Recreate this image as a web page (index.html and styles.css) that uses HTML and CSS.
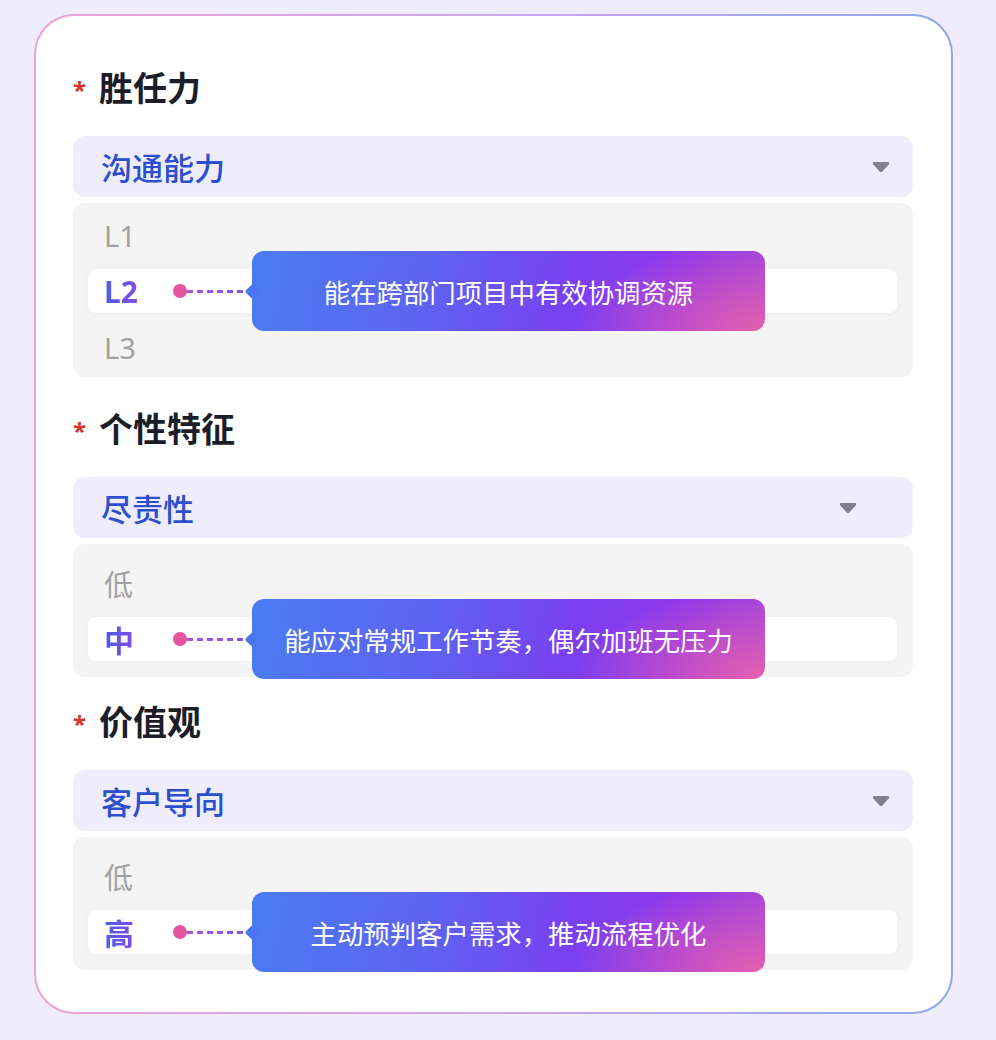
FILE: index.html
```html
<!DOCTYPE html>
<html lang="zh-CN">
<head>
<meta charset="utf-8">
<title>评估</title>
<link rel="stylesheet" href="styles.css">
</head>
<body>
<div class="card">
  <section class="section section--first">
    <h2 class="title"><span class="star">*</span>胜任力</h2>
    <div class="select">
      <span class="select-value">沟通能力</span>
      <svg class="caret" width="18" height="12" viewBox="0 0 18 12"><path d="M2.2 1h13.6c1.2 0 1.8 1.3 1.1 2.2l-6.8 7.6c-.6.6-1.6.6-2.2 0L1.1 3.2C.4 2.3 1 1 2.2 1z" fill="#7f8090"/></svg>
    </div>
    <div class="list list--three">
      <div class="opt">L1</div>
      <div class="opt opt--on"><span class="opt-label opt-label--latin">L2</span>
        <span class="link"><span class="dot"></span><span class="dash"></span></span>
        <div class="tip">能在跨部门项目中有效协调资源</div>
      </div>
      <div class="opt">L3</div>
    </div>
  </section>

  <section class="section section--second">
    <h2 class="title"><span class="star">*</span>个性特征</h2>
    <div class="select select--narrow">
      <span class="select-value">尽责性</span>
      <svg class="caret" width="18" height="12" viewBox="0 0 18 12"><path d="M2.2 1h13.6c1.2 0 1.8 1.3 1.1 2.2l-6.8 7.6c-.6.6-1.6.6-2.2 0L1.1 3.2C.4 2.3 1 1 2.2 1z" fill="#7f8090"/></svg>
    </div>
    <div class="list list--two">
      <div class="opt">低</div>
      <div class="opt opt--on"><span class="opt-label">中</span>
        <span class="link"><span class="dot"></span><span class="dash"></span></span>
        <div class="tip">能应对常规工作节奏，偶尔加班无压力</div>
      </div>
    </div>
  </section>

  <section class="section section--third">
    <h2 class="title"><span class="star">*</span>价值观</h2>
    <div class="select">
      <span class="select-value">客户导向</span>
      <svg class="caret" width="18" height="12" viewBox="0 0 18 12"><path d="M2.2 1h13.6c1.2 0 1.8 1.3 1.1 2.2l-6.8 7.6c-.6.6-1.6.6-2.2 0L1.1 3.2C.4 2.3 1 1 2.2 1z" fill="#7f8090"/></svg>
    </div>
    <div class="list list--two">
      <div class="opt">低</div>
      <div class="opt opt--on"><span class="opt-label">高</span>
        <span class="link"><span class="dot"></span><span class="dash"></span></span>
        <div class="tip">主动预判客户需求，推动流程优化</div>
      </div>
    </div>
  </section>
</div>
</body>
</html>
```

FILE: styles.css
```css
* { box-sizing: border-box; }
html, body { margin: 0; padding: 0; }
body {
  background: #efecfb;
  font-family: "Noto Sans CJK SC", "Noto Sans", sans-serif;
  width: 996px;
  height: 1040px;
  overflow: hidden;
}
.card {
  margin: 14px 0 0 34px;
  width: 919px;
  height: 1000px;
  border: 2px solid transparent;
  border-radius: 40px;
  background:
    linear-gradient(#ffffff, #ffffff) padding-box,
    linear-gradient(90deg, #eaa3d6 0%, #d2a6ec 45%, #8fa8ea 100%) border-box;
  padding: 53px 38px 0 37px;
}
.section { display: flex; flex-direction: column; }
.section--second { margin-top: 33px; }
.section--third { margin-top: 26px; }
.title {
  margin: 0;
  height: 44px;
  padding-bottom: 8px;
  display: flex;
  align-items: center;
  font-size: 34px;
  font-weight: 700;
  color: #1b1e29;
  line-height: 36px;
}
.star {
  color: #d8342c;
  font-size: 24px;
  font-weight: 700;
  width: 26px;
  font-family: "Noto Sans", sans-serif;
  position: relative;
  top: 3px;
}
.select {
  margin-top: 23px;
  height: 61px;
  border-radius: 12px;
  background: #efedfb;
  display: flex;
  align-items: center;
  justify-content: space-between;
  padding: 0 23px 0 28px;
}
.select--narrow { padding-right: 56px; }
.select-value {
  font-size: 31px;
  font-weight: 500;
  color: #2c50cd;
}
.caret { display: block; margin-top: 1px; }
.list {
  margin-top: 6px;
  background: #f4f4f5;
  border-radius: 12px;
  display: flex;
  flex-direction: column;
  gap: 12px;
}
.list--three { padding: 10px 16px 8px 15px; }
.list--two { padding: 17px 16px 16px 15px; }
.opt {
  position: relative;
  height: 44px;
  border-radius: 8px;
  padding-left: 16px;
  display: flex;
  align-items: center;
  font-size: 29px;
  color: #a2a2a4;
  font-family: "Noto Sans", "Noto Sans CJK SC", sans-serif;
}
.opt--on {
  background: #ffffff;
  box-shadow: 0 0 6px rgba(0, 0, 0, 0.03);
}
.opt-label {
  font-family: "Noto Sans CJK SC", sans-serif;
  font-weight: 700;
  font-size: 30px;
  background: linear-gradient(90deg, #4a5ee9 0%, #a33fe0 100%);
  -webkit-background-clip: text;
  background-clip: text;
  color: transparent;
  width: 50px;
}
.opt-label--latin { font-family: "Noto Sans", sans-serif; font-size: 30px; }
.link {
  position: absolute;
  left: 85px;
  top: 50%;
  transform: translateY(-50%);
  display: flex;
  align-items: center;
}
.dot {
  width: 14px;
  height: 14px;
  border-radius: 50%;
  background: #e5559e;
}
.dash {
  width: 60px;
  height: 3px;
  background:
    repeating-linear-gradient(90deg, transparent 0 6px, #ffffff 6px 10px),
    linear-gradient(90deg, #b050d8, #7a5ae8);
}
.tip {
  position: absolute;
  left: 164px;
  top: 50%;
  transform: translateY(-50%);
  width: 513px;
  height: 80px;
  border-radius: 12px;
  display: flex;
  align-items: center;
  justify-content: center;
  color: #ffffff;
  font-family: "Noto Sans CJK SC", sans-serif;
  font-size: 26.4px;
  font-weight: 400;
  background:
    radial-gradient(ellipse 190px 90px at 100% 100%, rgba(232, 96, 172, 0.95) 0%, rgba(232, 96, 172, 0) 100%),
    linear-gradient(100deg, #4a7cf1 0%, #5e62f2 35%, #7a40f1 62%, #9139ea 82%, #a445dc 100%);
  z-index: 2;
}
.tip::before {
  content: "";
  position: absolute;
  left: -5px;
  top: 50%;
  width: 11px;
  height: 11px;
  margin-top: -5.5px;
  background: #4b76f0;
  transform: rotate(45deg);
  border-radius: 2px;
}
```
